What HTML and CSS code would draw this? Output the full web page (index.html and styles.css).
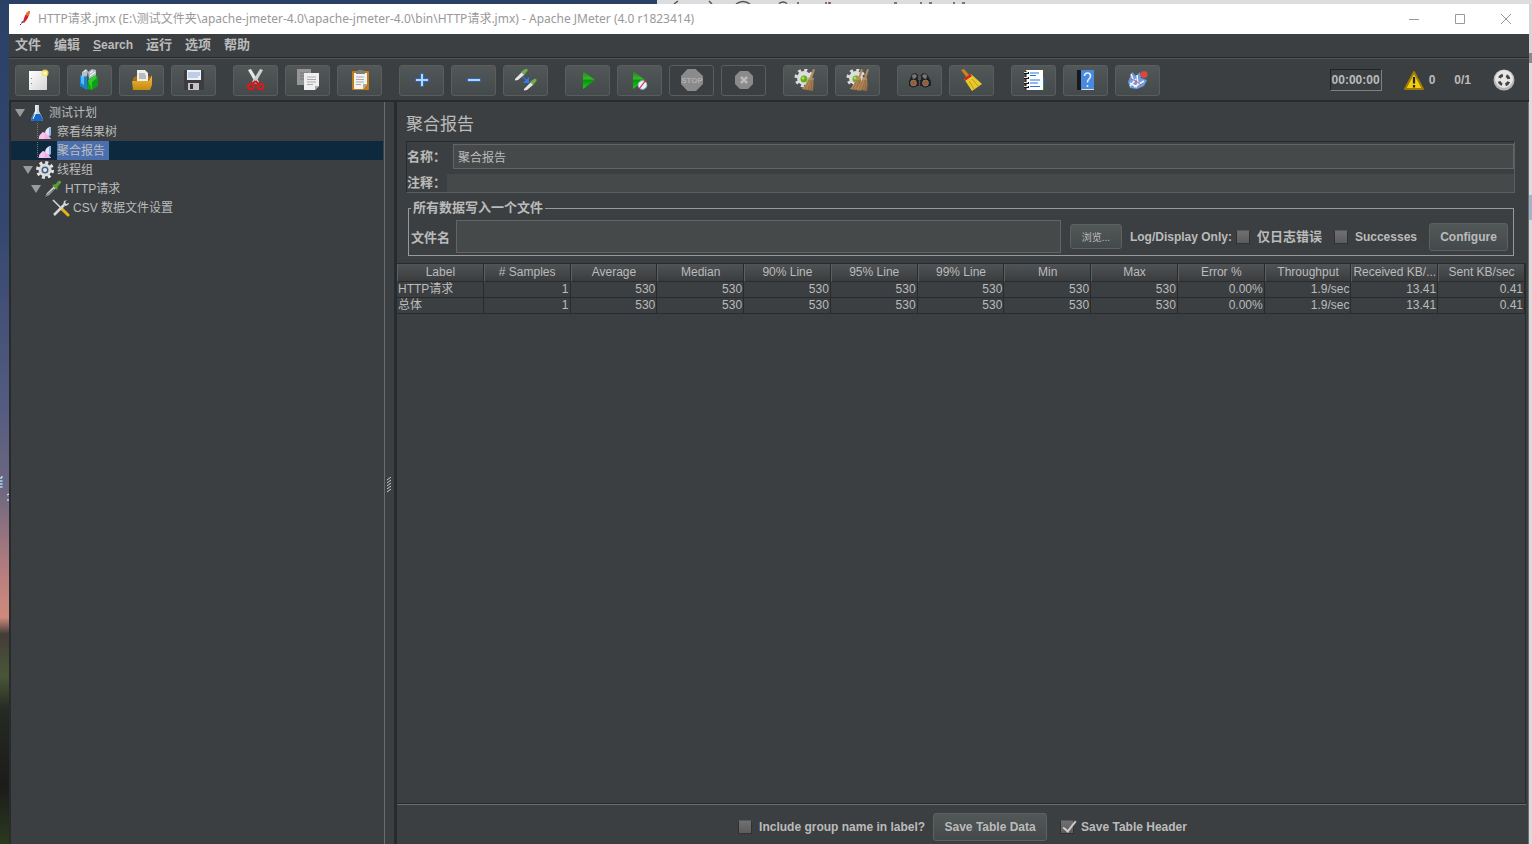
FILE: index.html
```html
<!DOCTYPE html>
<html lang="zh">
<head>
    <meta charset="UTF-8">
    <meta name="viewport" content="width=device-width, initial-scale=1.0">
    <title>Apache JMeter</title>
    <link rel="stylesheet" href="styles.css">
</head>
<body>
    <!-- desktop behind the window -->
    <div class="desk-top">
        <svg class="desk-marks" width="340" height="4" viewBox="0 0 340 4">
            <path d="M18 4l4-3M53 1l3 3M80 4q7-5 14 0M123 3.500q4-3 8 0M142 2v2M170 2v2M174 2v2M238 3h3M265 2v2M273 3h3M298 2v2M306 3h3" stroke="#555" stroke-width="1.500" fill="none"/>
            <path d="M173 2v2" stroke="#c33" stroke-width="1.500"/>
        </svg>
    </div>
    <div class="desk-left">
        <svg width="9" height="60" viewBox="0 0 9 60">
            <path d="M0 12h2v-2M0 15h3M0 18h3M0 21h3" stroke="#fff" fill="none"/>
            <path d="M3 11v11" stroke="#2a7fd0"/>
            <path d="M7 29l2-1M7 34h2" stroke="#fff"/>
            <path d="M7 36h2" stroke="#2a7fd0"/>
        </svg>
    </div>

    <div class="window">
        <header class="titlebar">
            <svg class="app-icon" width="14" height="20" viewBox="0 0 14 20">
                <path d="M11 2q-4 2-6 11l1 1q5-5 6-12z" fill="#d22128"/>
                <path d="M11 2q-3 1-3 4l2 1q2-2 2-5z" fill="#e97826"/>
                <path d="M4 12l-1 3 3-2z" fill="#6d2f7e"/>
                <path d="M2 15h1v1h-1z" fill="#336"/>
            </svg>
            <span class="title">HTTP请求.jmx (E:\测试文件夹\apache-jmeter-4.0\apache-jmeter-4.0\bin\HTTP请求.jmx) - Apache JMeter (4.0 r1823414)</span>
            <div class="window-buttons">
                <button aria-label="最小化"><svg width="10" height="10" viewBox="0 0 10 10"><path d="M0 5.500h10"/></svg></button>
                <button aria-label="最大化"><svg width="10" height="10" viewBox="0 0 10 10"><path d="M.5.5h9v9h-9z"/></svg></button>
                <button aria-label="关闭"><svg width="10" height="10" viewBox="0 0 10 10"><path d="M0 0l10 10M10 0L0 10"/></svg></button>
            </div>
        </header>

        <nav class="menubar">
            <button>文件</button>
            <button>编辑</button>
            <button class="latin"><u>S</u>earch</button>
            <button>运行</button>
            <button>选项</button>
            <button>帮助</button>
        </nav>

        <div class="toolbar">
            <svg class="defs" width="0" height="0">
                <defs>
                    <linearGradient id="green" x2="0" y2="1"><stop offset="0" stop-color="#2c7a1c"/><stop offset=".45" stop-color="#35b92b"/><stop offset=".5" stop-color="#07920a"/><stop offset="1" stop-color="#12d512"/></linearGradient>
                    <linearGradient id="gold" x2="0" y2="1"><stop offset="0" stop-color="#f0bd45"/><stop offset="1" stop-color="#c58a10"/></linearGradient>
                    <linearGradient id="paper" x2="1" y2="1"><stop offset="0" stop-color="#fff"/><stop offset="1" stop-color="#d4d4d4"/></linearGradient>
                    <linearGradient id="broom" x2="1" y2="1"><stop offset="0" stop-color="#d0ac7c"/><stop offset="1" stop-color="#94683a"/></linearGradient>
                    <g id="cog">
                        <circle cx="10" cy="9" r="7" fill="#ddd"/>
                        <circle cx="10" cy="9" r="8" fill="none" stroke="#ddd" stroke-width="3" stroke-dasharray="3 3.280"/>
                        <circle cx="10" cy="10" r="3.500" fill="#65ad1b"/>
                        <circle cx="9" cy="9" r="1.500" fill="#a4df55"/>
                    </g>
                    <g id="besom">
                        <path d="M19 0l2 .5-3 9-2-.5z" fill="#b48c5c"/>
                        <path d="M15 8l4 1q1 6 0 13l-11-2q4-4 7-12z" fill="url(#broom)"/>
                        <path d="M15 11l-4 9M17 11l-3 10M18 11l-1 10" stroke="#7d5830" stroke-width=".5" fill="none"/>
                    </g>
                    <g id="dropper">
                        <path d="M0 10l7-7 2.500 2.500L3 11l-3 .5z" fill="#e6e6e6"/>
                        <path d="M6 3l4-3q3-1 2.500 2l-3.500 4z" fill="#72ad4c"/>
                    </g>
                    <g id="graph">
                        <path d="M1.500 0v15.500h14" fill="none" stroke="#777" stroke-dasharray="1 1"/>
                        <path d="M3 16v-3l4-4 3 1 3 3 2 3z" fill="#f4aee4"/>
                        <path d="M3 16l1-4 3-3 2 3-1 4z" fill="#f9c3ef"/>
                        <path d="M9 9q2-5 6-5v8l-2 1-3-2z" fill="#dfe9fb"/>
                        <path d="M13 5l2-1v8l-2 1z" fill="#8fb4ee"/>
                    </g>
                </defs>
            </svg>

            <div class="tool-group">
                <button aria-label="新建"><svg viewBox="0 0 23 23"><path d="M3 2h18v19H3z" fill="url(#paper)"/><path d="M5.500 9v1M5.500 14v1" stroke="#888"/><circle cx="19" cy="4" r="3.500" fill="#f5e66b" opacity=".85"/><circle cx="19" cy="4" r="1.500" fill="#fffbd0"/></svg></button>
                <button aria-label="模板"><svg viewBox="0 0 23 23"><path d="M2 6l7-1v16l-7-4z" fill="#1584d4"/><path d="M3 7l3 1v8l-3-2z" fill="#5cb9f2"/><path d="M10 11l4 1v9l-5-1z" fill="#19a31a"/><path d="M10 11l8-5 2 7-6 8z" fill="#2bd02b"/><path d="M14 13l6-5v9l-6 4z" fill="#0f9d12"/><path d="M4 3l4-3 2 2-1 5-5 1zM10 3l4-3 4 1v5l-7 4z" fill="#b5c3c6"/><path d="M6 3l2-2M12 4l3-2M12 7l5-4" stroke="#fff"/></svg></button>
                <button aria-label="打开"><svg viewBox="0 0 23 23"><path d="M3 9l3-2h13l2 2v10H3z" fill="#a56e0c"/><path d="M7 1h8l3 3v10H7z" fill="#eee"/><path d="M9 5h6M9 7h7M9 9h7" stroke="#888"/><path d="M2 12h17l3-6v10l-2 5H3z" fill="url(#gold)"/></svg></button>
                <button aria-label="保存"><svg viewBox="0 0 23 23"><rect x="2" y="1" width="20" height="20" rx="1.500" fill="#3c3c42"/><path d="M5 1h14v10H5z" fill="#eef3fa"/><path d="M6 4h12M6 6h12M6 8h10" stroke="#8ba9d2"/><path d="M6 14h11v7H6z" fill="#c4c4c4"/><path d="M8 15h3v5H8z" fill="#333"/></svg></button>
            </div>
            <div class="tool-group">
                <button aria-label="剪切"><svg viewBox="0 0 23 23"><path d="M4 1l3-1 8 13-3 2z" fill="#e6e6e6"/><path d="M19 1l-3-1-8 13 3 2z" fill="#cfcfcf"/><path d="M11.500 12l-3 3M11.500 12l3 3" stroke="#d01212" stroke-width="2"/><ellipse cx="7" cy="17.500" rx="3" ry="2.500" fill="none" stroke="#e01818" stroke-width="2.200"/><ellipse cx="16.500" cy="17.500" rx="3" ry="2.500" fill="none" stroke="#e01818" stroke-width="2.200"/></svg></button>
                <button aria-label="复制"><svg viewBox="0 0 23 23"><path d="M1 0h14v16H1z" fill="#969696"/><path d="M4 4h8M4 7h8M4 10h8" stroke="#777"/><path d="M8 4h15v13l-4 4H8z" fill="#efefef"/><path d="M19 21v-4h4z" fill="#aaa"/><path d="M11 8h9M11 10.500h9M11 13h9M11 15.500h6" stroke="#aaa"/></svg></button>
                <button aria-label="粘贴"><svg viewBox="0 0 23 23"><rect x="4" y="2" width="17" height="19" rx="1" fill="#c07c1a"/><path d="M6 4h13v11l-4 5H6z" fill="#f2f2f2"/><path d="M15 20v-5h4z" fill="#aaa"/><path d="M8 4l2-3h5l2 3v1H8z" fill="#7d807c"/><path d="M8 8h8M8 10.500h8M8 13h8M8 15.500h5" stroke="#aaa"/></svg></button>
            </div>
            <div class="tool-group">
                <button aria-label="全部展开"><svg viewBox="0 0 23 23"><path d="M10 4h4v5h5v4h-5v5h-4v-5H5V9h5z" fill="#2f68b4"/><path d="M12 5v12M6 11h12" stroke="#b5d5f7" stroke-width="2"/></svg></button>
                <button aria-label="全部折叠"><svg viewBox="0 0 23 23"><path d="M5 9h14v4H5z" fill="#2f68b4"/><path d="M6 11h12" stroke="#b5d5f7" stroke-width="2"/></svg></button>
                <button aria-label="切换"><svg viewBox="0 0 23 23"><use href="#dropper" x="1"/><use href="#dropper" x="10" y="10"/><path d="M9 8l4 4" stroke="#2b7cf0" stroke-dasharray="2 1" stroke-width="1.500"/><path d="M15 8v6H9z" fill="#2b7cf0"/></svg></button>
            </div>
            <div class="tool-group">
                <button aria-label="启动"><svg viewBox="0 0 23 23"><path d="M7 2l12 9-12 9z" fill="url(#green)"/></svg></button>
                <button aria-label="不停顿开始"><svg viewBox="0 0 23 23"><path d="M5 2l12 9-12 9z" fill="url(#green)"/><circle cx="14.500" cy="16" r="4.300" fill="#e8f1fb" stroke="#9dbfe2"/><path d="M18 11l-7 9" stroke="#d22" stroke-width="1.200"/></svg></button>
                <button class="off" aria-label="停止" disabled><svg viewBox="0 0 23 23"><path d="M7.500 0h8L23 7v8l-7 7H7.500L1 15V7z" fill="#8b8b8b"/><text x="12" y="14" class="stop-text">STOP</text></svg></button>
                <button class="off" aria-label="关闭" disabled><svg viewBox="0 0 23 23"><path d="M8 2h8l5 5v8l-5 5H8l-5-5V7z" fill="#8b8b8b"/><path d="M9 8l6 6M15 8l-6 6" stroke="#bababa" stroke-width="2.500"/></svg></button>
            </div>
            <div class="tool-group">
                <button aria-label="清除"><svg viewBox="0 0 23 23"><use href="#cog"/><use href="#besom"/></svg></button>
                <button aria-label="清除全部"><svg viewBox="0 0 23 23"><use href="#cog"/><use href="#besom" x="-4"/><use href="#besom" x="2"/></svg></button>
            </div>
            <div class="tool-group">
                <button aria-label="查找"><svg viewBox="0 0 23 23"><path d="M4 5l4-1 3 3v10H1v-5zM19 5l-4-1-3 3v10h11v-5z" fill="#252525"/><path d="M4 6l3-1 2 2-4 5zM19 6l-3-1-2 2 4 5z" fill="#777"/><circle cx="5.500" cy="14" r="4" fill="#777" stroke="#111"/><circle cx="17.500" cy="14" r="4" fill="#777" stroke="#111"/><circle cx="5.500" cy="14" r="2.300" fill="#a45a20"/><circle cx="17.500" cy="14" r="2.300" fill="#a45a20"/><path d="M10 7h3v4h-3z" fill="#555"/></svg></button>
                <button aria-label="重置搜索"><svg viewBox="0 0 23 23"><path d="M1 1l3-1 6 7-3 2z" fill="#c88420"/><path d="M4 10l7-5 11 10-10 7z" fill="#e8c92a"/><path d="M9 12l5 8M12 10l6 7" stroke="#a38810" stroke-width=".7"/><path d="M4 9.500L10.500 5l1.500 2-7 5z" fill="#d42222"/></svg></button>
            </div>
            <div class="tool-group">
                <button aria-label="函数助手"><svg viewBox="0 0 23 23"><path d="M18 9h4v6h-4z" fill="#1d7be0"/><path d="M18 15h4v6h-4z" fill="#1d9a22"/><path d="M4 1h17v20H4z" fill="#fff"/><path d="M4 2v19" stroke="#111"/><path d="M2 4h5M2 9h5M2 14h5M2 18h5" stroke="#111" stroke-width="2"/><path d="M2 3.500h4M2 8.500h4M2 13.500h4M2 17.500h4" stroke="#ddd"/><path d="M8 4h9M8 6.500h6M8 11h10M8 14h8M8 17.500h10" stroke="#2374df"/></svg></button>
                <button aria-label="帮助"><svg viewBox="0 0 23 23"><path d="M3 1h4v20H3z" fill="#17191d"/><path d="M7 1h13v20H7z" fill="#4a8ade"/><path d="M7 21h13v-1H8z" fill="#ddd"/><path d="M10.500 7q0-3 3-3t3 3q0 2-2 3.500-1 1-1 3M13.500 16v2" fill="none" stroke="#e8f1ff" stroke-width="1.500"/></svg></button>
                <button aria-label="特性"><svg viewBox="0 0 23 23"><path d="M2 13l4-10 4 4 4-4 1 6 6 2-3 6-7 3-7-1z" fill="#6d9be0"/><path d="M5 5l3 8M4 14l7 4M11 6l1 9M8 18l10-6M4 17l6-7" stroke="#eef3fb" stroke-width="1.500"/><path d="M5 10l5 2 5 4" stroke="#d55" fill="none"/><circle cx="18" cy="5.500" r="3.500" fill="#d9473e"/></svg></button>
            </div>

            <div class="status">
                <output class="timer">00:00:00</output>
                <button class="errors"><svg width="22" height="21" viewBox="0 0 22 21"><path d="M11 2l9 17H2z" fill="#f4cd10" stroke="#9a7c08" stroke-width="2" stroke-linejoin="round"/><path d="M11 7v6.500M11 15v2.500" stroke="#222" stroke-width="2.200"/></svg>0</button>
                <span class="threads">0/1</span>
                <svg width="22" height="22" viewBox="0 0 22 22"><circle cx="11" cy="11" r="10.500" fill="#b5b5b5"/><circle cx="11" cy="10" r="9" fill="#e6e6e6"/><circle cx="11" cy="11" r="5" fill="none" stroke="#444" stroke-width="3" stroke-dasharray="4.300 3.550" stroke-dashoffset="-1.800"/></svg>
            </div>
        </div>

        <div class="main">
            <aside class="tree">
                <ul>
                    <li class="level0"><i class="arrow"></i><svg viewBox="0 0 18 18"><path d="M7 1h4v6l4 8q0 2-2 2H5q-2 0-2-2l4-8z" fill="#c9d6de"/><path d="M6 10h6l3 5q0 2-2 2H5q-2 0-2-2z" fill="#1768c6"/><path d="M8 1v7l-3 7" stroke="#fff" fill="none"/></svg><span>测试计划</span></li>
                    <li class="level1"><i class="leaf"></i><svg viewBox="0 0 18 18"><use href="#graph"/></svg><span>察看结果树</span></li>
                    <li class="level1 selected"><i class="leaf"></i><svg viewBox="0 0 18 18"><use href="#graph"/></svg><span>聚合报告</span></li>
                    <li class="level1"><i class="arrow"></i><svg viewBox="0 0 18 18"><circle cx="9" cy="9" r="7.500" fill="none" stroke="#e4e4e4" stroke-width="3" stroke-dasharray="3 2.890"/><circle cx="9" cy="9" r="5" fill="#3e5f8c" stroke="#dcdcdc" stroke-width="3"/><circle cx="9" cy="9" r="2" fill="#e6e6e6"/></svg><span>线程组</span></li>
                    <li class="level2"><i class="arrow"></i><svg viewBox="0 0 18 18"><path d="M1 17l2-4 7-7 2 2-7 7z" fill="#cfd3d0"/><path d="M1 17l9-8" stroke="#555"/><path d="M8 5l4-1 2-3q4-1 3 2l-3 3-1 4z" fill="#56a032"/></svg><span>HTTP请求</span></li>
                    <li class="level3"><i class="leaf"></i><svg viewBox="0 0 18 18"><path d="M1 1l8 8" stroke="#ddd" stroke-width="1.500"/><path d="M9 9l7 7" stroke="#e7b418" stroke-width="3" stroke-linecap="round"/><path d="M2 16l10-10" stroke="#d8d8d8" stroke-width="2.500"/><path d="M15 1l-3 1-1 4 3 1 3-2v-1l-3 1-1-2z" fill="#d8d8d8"/></svg><span>CSV 数据文件设置</span></li>
                </ul>
            </aside>
            <div class="splitter">
                <svg width="5" height="16" viewBox="0 0 5 16"><path d="M0 3l4-3M0 6l4-3M0 9l4-3M0 12l4-3M0 15l4-3" stroke="#ccc"/></svg>
            </div>

            <main class="panel">
                <h1>聚合报告</h1>
                <div class="name-box">
                    <div class="field"><label for="name">名称：</label><input id="name" type="text" value="聚合报告"></div>
                    <div class="field comment"><label for="comment">注释：</label><input id="comment" type="text"></div>
                </div>

                <fieldset>
                    <legend>所有数据写入一个文件</legend>
                    <div class="file-row">
                        <label for="file">文件名</label>
                        <input id="file" type="text">
                        <button class="btn browse">浏览...</button>
                        <span class="only">Log/Display Only:</span>
                        <label class="check errors-only"><input type="checkbox">仅日志错误</label>
                        <label class="check"><input type="checkbox">Successes</label>
                        <button class="btn configure">Configure</button>
                    </div>
                </fieldset>

                <div class="table-wrap">
                    <table>
                        <thead>
                            <tr><th>Label</th><th># Samples</th><th>Average</th><th>Median</th><th>90% Line</th><th>95% Line</th><th>99% Line</th><th>Min</th><th>Max</th><th>Error %</th><th>Throughput</th><th>Received KB/...</th><th>Sent KB/sec</th></tr>
                        </thead>
                        <tbody>
                            <tr><td>HTTP请求</td><td>1</td><td>530</td><td>530</td><td>530</td><td>530</td><td>530</td><td>530</td><td>530</td><td>0.00%</td><td>1.9/sec</td><td>13.41</td><td>0.41</td></tr>
                            <tr><td>总体</td><td>1</td><td>530</td><td>530</td><td>530</td><td>530</td><td>530</td><td>530</td><td>530</td><td>0.00%</td><td>1.9/sec</td><td>13.41</td><td>0.41</td></tr>
                        </tbody>
                    </table>
                </div>

                <footer>
                    <label class="check"><input type="checkbox">Include group name in label?</label>
                    <button class="btn save">Save Table Data</button>
                    <label class="check"><input type="checkbox" checked>Save Table Header</label>
                </footer>
            </main>
        </div>
    </div>

    <div class="desk-right"></div>
</body>
</html>
```

FILE: styles.css
```css
* {
    box-sizing: border-box;
}
body {
    margin: 0;
    height: 100vh;
    overflow: hidden;
    display: grid;
    grid-template-columns: 9px minmax(0, 1fr) 3px;
    grid-template-rows: 4px minmax(0, 1fr);
    font-family: "Liberation Sans", "Noto Sans CJK SC", sans-serif;
    font-size: 12px;
    color: #bbbbbb;
}
button, input {
    font: inherit;
    color: inherit;
    margin: 0;
}
button {
    padding: 0;
    border: 0;
    background: none;
}
/* desktop */
.desk-top {
    grid-column: 1 / 4;
    background: linear-gradient(to right, #2a4064 42.9%, #dcdddf 42.9%);
    display: flex;
    justify-content: flex-end;
    padding-right: 536px;
}
.desk-left {
    background: linear-gradient(#2b4166, #33466e 25%, #545b80 48%, #6f6880 58%, #b97e7e 68%, #d08a7c 73%, #443c38 75%, #4a5638 80%, #262a22 84%, #1c1b1a 93%, #2a3a1e);
    padding-top: 462px;
}
.desk-right {
    background: linear-gradient(#d5d5d5 49px, #8a8a8a 49px, #8a8a8a 59px, #dcdcdc 59px, #dcdcdc 191px, #a5b2cc 191px, #a5b2cc 216px, #dadada 216px);
}
/* window */
.window {
    display: flex;
    flex-direction: column;
    min-width: 0;
    background: #3c3f41;
}
.titlebar {
    display: flex;
    align-items: center;
    height: 30px;
    padding: 0 18px 0 9px;
    background: #ffffff;
    color: #999999;
}
.title {
    font-family: "Noto Sans", "Noto Sans CJK SC", sans-serif;
    margin-left: 6px;
    line-height: 20px;
    white-space: nowrap;
}
.window-buttons {
    display: flex;
    gap: 36px;
    margin-left: auto;
}
.window-buttons button {
    display: flex;
}
.window-buttons svg {
    fill: none;
    stroke: #999999;
}
.menubar {
    display: flex;
    gap: 13px;
    height: 24px;
    padding: 0 6px;
    border-bottom: 1px solid #282828;
    font-weight: bold;
}
.menubar button {
    font-size: 13px;
    line-height: 20px;
    height: 22px;
}
.menubar .latin {
    font-size: 12px;
}
.toolbar {
    display: flex;
    align-items: center;
    gap: 17px;
    height: 44px;
    padding: 1px 14px 0 6px;
    border-top: 1px solid #555555;
    border-bottom: 2px solid #282b2d;
}
.defs {
    position: absolute;
}
.tool-group {
    display: flex;
    gap: 7px;
}
.tool-group button {
    display: flex;
    align-items: center;
    justify-content: center;
    width: 45px;
    height: 31px;
    border: 1px solid #5a5d5e;
    border-radius: 3px;
    background: linear-gradient(#525758, #44494b);
}
.tool-group .off {
    background: none;
}
.tool-group svg {
    width: 23px;
    height: 23px;
}
.stop-text {
    font-size: 8px;
    font-weight: bold;
    text-anchor: middle;
    fill: #b0b0b0;
}
.status {
    display: flex;
    align-items: center;
    margin-left: auto;
    font-weight: bold;
}
.timer {
    height: 22px;
    padding: 0 1px;
    line-height: 20px;
    border: 1px solid;
    border-color: #222222 #808080 #808080 #222222;
}
.errors {
    display: flex;
    align-items: center;
    gap: 4px;
    margin: 0 19px 0 21px;
}
.threads {
    margin-right: 22px;
}
.main {
    display: flex;
    flex: 1;
    min-height: 0;
}
/* tree */
.tree {
    width: 376px;
    border-left: 2px solid #282b2d;
    border-right: 1px solid #6b6e70;
}
.tree ul {
    list-style: none;
    margin: 0;
    padding: 1px 1px 0 0;
}
.tree li {
    display: flex;
    align-items: center;
    gap: 3px;
    height: 19px;
}
.tree svg {
    width: 18px;
    height: 18px;
}
.tree span {
    height: 19px;
    line-height: 21px;
}
.level0 {
    padding-left: 4px;
}
.level1 {
    padding-left: 12px;
}
.level2 {
    padding-left: 20px;
}
.level3 {
    padding-left: 28px;
}
.arrow {
    width: 10px;
    border: 5px solid transparent;
    border-top: 8px solid #9a9a9a;
    border-bottom: 0;
}
.leaf {
    width: 10px;
}
.selected {
    background: #0d293e;
}
.selected span {
    background: #4b6eaf;
    padding-right: 4px;
}
.splitter {
    width: 9px;
    display: flex;
    align-items: center;
    justify-content: center;
    padding-top: 24px;
}
/* report panel */
.panel {
    flex: 1;
    min-width: 0;
    display: flex;
    flex-direction: column;
    border-left: 3px solid #282b2d;
    border-right: 1px solid #6b6e70;
}
h1 {
    margin: 11px 0 4px 9px;
    font-size: 17px;
    font-weight: normal;
    line-height: 24px;
}
.name-box {
    margin: 0 13px 0 9px;
    border: 1px solid #282b2d;
    border-right-color: #5c5f61;
    border-bottom-color: #5c5f61;
}
.field {
    display: flex;
    align-items: center;
    margin-top: 2px;
}
.field label,
legend,
.file-row > label {
    font-size: 13px;
    font-weight: bold;
    white-space: nowrap;
}
.field label {
    width: 46px;
    line-height: 18px;
}
.comment label {
    width: 40px;
}
input[type="text"] {
    flex: 1;
    min-width: 0;
    height: 25px;
    padding: 0 4px;
    border: 1px solid #646464;
    background: #45494a;
}
.comment {
    margin-top: 5px;
}
.comment input[type="text"] {
    height: 18px;
    border: 0;
}
fieldset {
    min-width: 0;
    margin: 5px 14px 0 11px;
    padding: 0 5px 2px 2px;
    border: 1px solid #999999;
}
legend {
    padding: 0 2px;
    line-height: 20px;
}
.file-row {
    display: flex;
    align-items: center;
    margin-top: 2px;
}
.file-row input[type="text"] {
    height: 33px;
    margin: 0 9px 0 6px;
}
.btn {
    border: 1px solid #5e6162;
    border-radius: 3px;
    background: linear-gradient(#525758, #44494b);
    font-weight: bold;
    white-space: nowrap;
}
.browse {
    width: 52px;
    height: 25px;
    font-size: 10px;
    font-weight: normal;
}
.configure {
    width: 79px;
    height: 28px;
}
.only {
    margin: 0 4px 0 8px;
    font-weight: bold;
    white-space: nowrap;
}
.check {
    display: flex;
    align-items: center;
    gap: 7px;
    font-weight: bold;
    line-height: 20px;
    white-space: nowrap;
}
.file-row .check {
    margin-right: 12px;
    font-size: 12px;
}
.file-row .errors-only {
    font-size: 13px;
}
input[type="checkbox"] {
    appearance: none;
    width: 14px;
    height: 14px;
    border: 1px solid #2f3133;
    border-top-color: #55585a;
    background: linear-gradient(#707070, #5c5c5c);
}
input[type="checkbox"]:checked::after {
    content: "";
    display: block;
    width: 5px;
    height: 12px;
    margin: -3px 0 0 5px;
    border: solid #cccccc;
    border-width: 0 2px 2px 0;
    transform: rotate(38deg);
}
.table-wrap {
    flex: 1;
    min-height: 0;
    margin: 7px 2px 0 0;
    border: 1px solid #282b2d;
    border-width: 1px 1px 1px 0;
    box-shadow: 0 1px 0 #6b6e70;
}
table {
    width: 100%;
    table-layout: fixed;
    border-spacing: 0;
}
th, td {
    height: 16px;
    padding: 0 1px;
    border-right: 1px solid #282b2d;
    border-bottom: 1px solid #282b2d;
    line-height: 15px;
    text-align: right;
    white-space: nowrap;
    overflow: hidden;
}
th {
    height: 18px;
    padding: 0;
    border-left: 1px solid #5c5f61;
    background: linear-gradient(#505355, #3a3c3e);
    font-weight: normal;
    line-height: 17px;
    text-align: center;
}
td:first-child {
    text-align: left;
}
footer {
    display: flex;
    align-items: center;
    justify-content: center;
    height: 40px;
    padding-top: 6px;
}
.save {
    width: 114px;
    height: 28px;
    margin: 0 13px 0 8px;
}
```
